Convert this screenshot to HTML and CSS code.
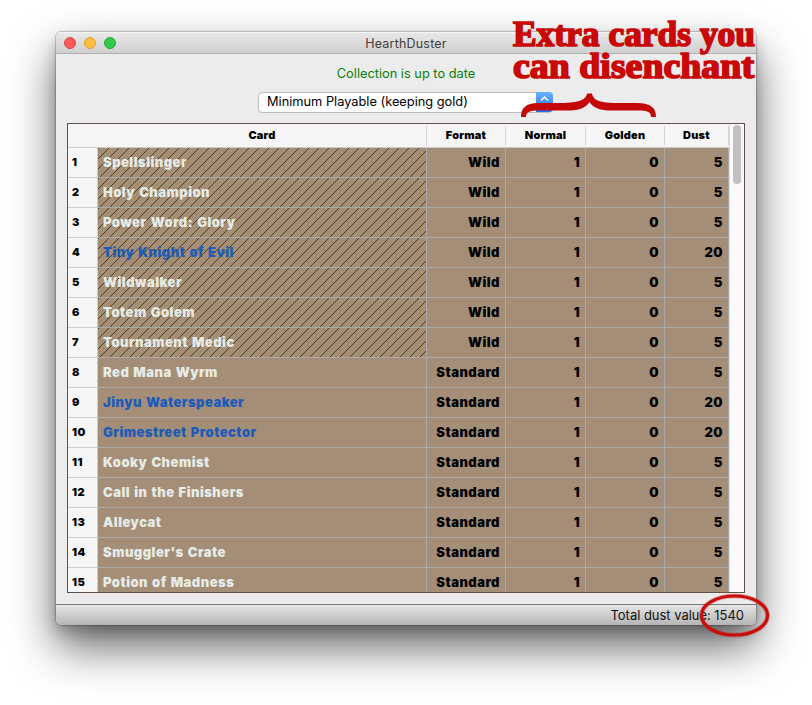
FILE: index.html
```html
<!DOCTYPE html>
<html lang="en"><head><meta charset="utf-8"><title>HearthDuster</title><link rel="stylesheet" href="styles.css"></head>
<body>
<main class="window">
<header class="titlebar"><div class="lights"><i class="light red"></i><i class="light yellow"></i><i class="light green"></i></div><span class="title">HearthDuster</span></header>
<section class="content">
<p class="status">Collection is up to date</p>
<div class="select"><span>Minimum Playable (keeping gold)</span><b class="stepper"><svg width="17" height="20" viewBox="0 0 17 20"><path d="M5 8.500 8.500 5 12 8.500M5 12.500 8.500 16 12 12.500" fill="none" stroke="#fff" stroke-width="1.500"/></svg></b></div>
<div class="frame"><div class="table" id="table">
<div class="row head"><span class="card">Card</span><span>Format</span><span>Normal</span><span>Golden</span><span>Dust</span></div>
</div><div class="scroll"><i></i></div></div>
</section>
<footer class="footer">Total dust value: 1540</footer>
</main>
<svg class="notes" width="812" height="705" viewBox="0 0 812 705">
<g class="note"><text x="513" y="45.500" textLength="242" lengthAdjust="spacingAndGlyphs">Extra cards you</text><text x="513" y="78" textLength="241" lengthAdjust="spacingAndGlyphs">can disenchant</text></g>
<path d="M521 117C521 108 526 103 538 103H565C580 102 586 100 587 93.500H592C593 100 599 102.500 614 103H637C651 103 656 108 656 117H651C651 112 648 110.500 638 110.500H612C600 110.500 593 108 589.500 102C586 108 579 110.500 567 110.500H540C529 110.500 526 112 526 117Z" fill="#c40808"/>
<ellipse cx="734.500" cy="615.500" rx="33" ry="19.500" fill="none" stroke="#c90d0d" stroke-width="5" opacity=".3"/>
<ellipse cx="734.500" cy="615.500" rx="33" ry="19.500" fill="none" stroke="#c90d0d" stroke-width="3.200"/>
</svg>
<script src="app.js"></script>
</body></html>
```
FILE: styles.css
```css
*{box-sizing:border-box}
body{margin:0;width:812px;height:705px;overflow:hidden;background:#fff;font-family:Inter,"Liberation Sans",sans-serif;font-size:13px;color:#111;padding:32px 56px}
.window{width:700px;height:593px;border-radius:5px;background:#ececec;display:flex;flex-direction:column;overflow:hidden;box-shadow:0 0 1px 1px #0003,0 22px 46px #0009,0 8px 14px #0003}
.titlebar{height:22px;flex:none;background:linear-gradient(#e8e8e8,#d0d0d0);border-top:1px solid #f5f5f5;border-bottom:1px solid #afafaf;display:grid;grid-template-columns:1fr auto 1fr;align-items:center;color:#3e3e3e}
.lights{display:flex;gap:8px;padding-left:8px}
.light{width:12px;height:12px;border-radius:50%}
.red{background:#fc5b57;border:1px solid #df4744}
.yellow{background:#fdbe41;border:1px solid #de9f34}
.green{background:#34c84a;border:1px solid #27aa35}
.title{font-size:12.500px;letter-spacing:.2px}
.content{flex:1;padding:11px 11px 0;display:flex;flex-direction:column;align-items:center}
.status{margin:0;line-height:18px;color:#0a800a;font-size:12.800px}
.select{margin:9px 1px 0 0;width:295px;height:21px;background:#fff;border:1px solid #bdbdbd;border-radius:4px;display:flex;justify-content:space-between;line-height:18px;padding-left:8px;flex:none;color:#000;font-size:12.800px}
.stepper{width:17px;height:20px;margin:-1px;border-radius:0 4px 4px 0;background:linear-gradient(#6bb2fb,#1d70fa)}
.stepper svg{display:block}
.frame{margin-top:10px;width:678px;height:470px;flex:none;border:1px solid #5f5048;display:flex;overflow:hidden;background:#f6f6f6}
.table{width:661px;flex:none}
.row{display:grid;grid-template-columns:30px 329px 79px 80px 79px 64px;height:30px;font-weight:900;font-size:13px;letter-spacing:.48px;word-spacing:1px;color:#000}
.row span{border-right:1px solid #aaa;border-bottom:1px solid #aaa;background:#a58e78;text-align:right;padding-right:5px;line-height:29px;white-space:nowrap}
.row .num{background:#f6f6f6;border-color:#ccc;text-align:left;padding-left:4px;font-size:11px;line-height:28px}
.row .name{text-align:left;padding-left:5px;color:#e6ebe5}
.row .rare{color:#1c5cb8}
.row .hatched{background-attachment:fixed;background-image:url("data:image/svg+xml,%3Csvg xmlns='http://www.w3.org/2000/svg' width='10' height='10'%3E%3Cpath d='M6 0h1v1h-1zM5 1h1v1h-1zM4 2h1v1h-1zM3 3h1v1h-1zM2 4h1v1h-1zM1 5h1v1h-1zM0 6h1v1h-1zM9 7h1v1h-1zM8 8h1v1h-1zM7 9h1v1h-1z' fill='%234a4212'/%3E%3C/svg%3E")}
.row.head{height:24px;font-size:11px;letter-spacing:.2px}
.head span{background:linear-gradient(#d4d4d4,#d4d4d4) right 2px/1px 19px no-repeat #f6f6f6;border-right:0;border-color:#ccc;text-align:center;padding:0 1px 0 0;line-height:23px}
.head .card{grid-column:span 2;padding-left:30px}
.scroll{flex:1;background:#fafafa;border-left:1px solid #ddd;padding:1px 3px}
.scroll i{display:block;width:8px;height:59px;border-radius:4px;background:#c1c1c1}
.footer{height:21px;flex:none;border-top:1px solid #777;background:linear-gradient(#e5e5e5,#b5b5b5);text-align:right;padding-right:12px;line-height:21px;font-size:12.950px}
.notes{position:absolute;left:0;top:0}
.note{font:bold 35px/1 "Liberation Serif",serif;fill:#c90808;stroke:#c90808;stroke-width:1.7}
```
FILE: app.js
```js
const cards = [["Spellslinger","Wild",5],["Holy Champion","Wild",5],["Power Word: Glory","Wild",5],["Tiny Knight of Evil","Wild",20],["Wildwalker","Wild",5],["Totem Golem","Wild",5],["Tournament Medic","Wild",5],["Red Mana Wyrm","Standard",5],["Jinyu Waterspeaker","Standard",20],["Grimestreet Protector","Standard",20],["Kooky Chemist","Standard",5],["Call in the Finishers","Standard",5],["Alleycat","Standard",5],["Smuggler's Crate","Standard",5],["Potion of Madness","Standard",5]];
document.getElementById("table").insertAdjacentHTML("beforeend", cards.map(([name, format, dust], i) =>
  `<div class="row"><span class="num">${i + 1}</span><span class="name${dust === 20 ? " rare" : ""}${format === "Wild" ? " hatched" : ""}">${name}</span><span>${format}</span><span>1</span><span>0</span><span>${dust}</span></div>`).join(""));
```
